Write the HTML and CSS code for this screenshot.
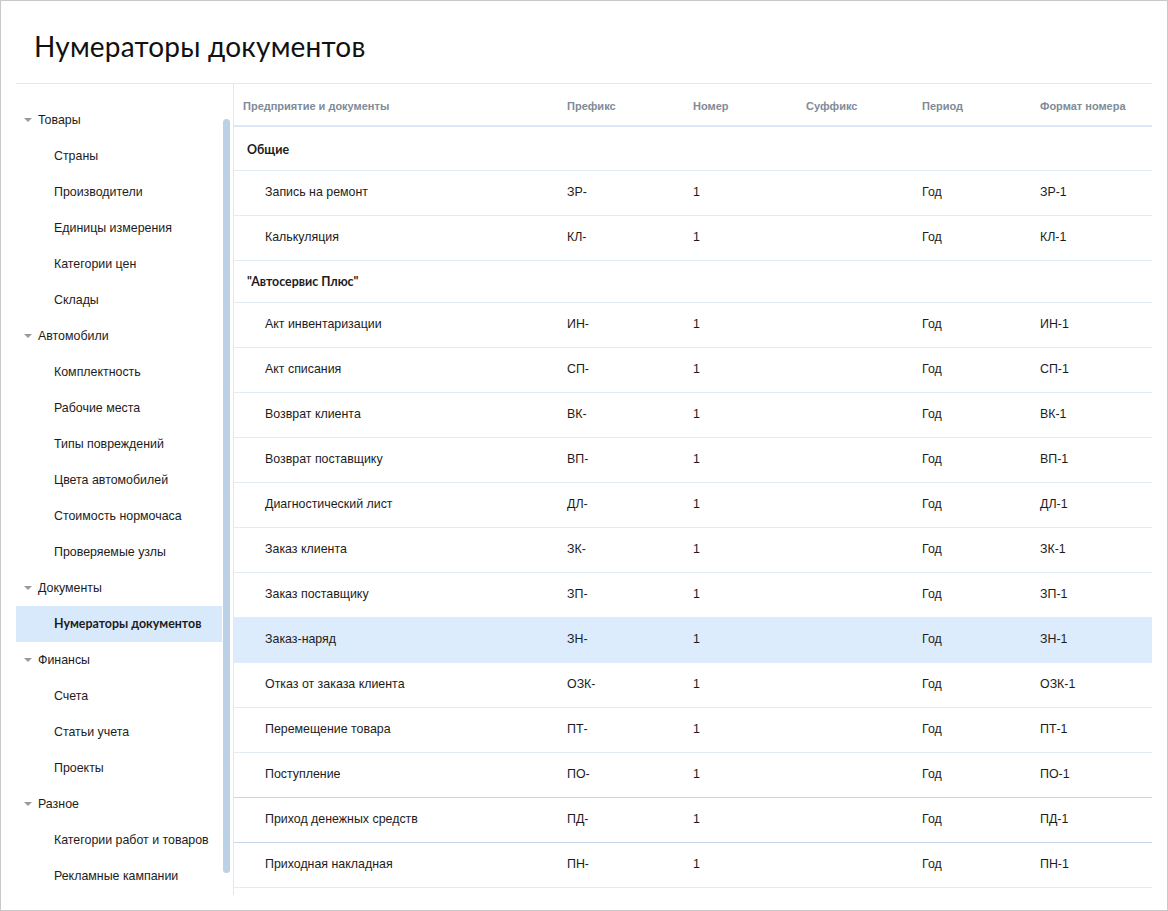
FILE: index.html
```html
<!DOCTYPE html>
<html lang="ru">
<head>
<meta charset="utf-8">
<title>Нумераторы документов</title>
<link rel="stylesheet" href="styles.css">
</head>
<body>
<div class="frame">
  <h1 class="title">Нумераторы документов</h1>
  <div class="main">
    <aside class="sidebar">
      <ul class="nav">
        <li class="nav-item parent"><span class="caret"></span>Товары</li>
        <li class="nav-item child">Страны</li>
        <li class="nav-item child">Производители</li>
        <li class="nav-item child">Единицы измерения</li>
        <li class="nav-item child">Категории цен</li>
        <li class="nav-item child">Склады</li>
        <li class="nav-item parent"><span class="caret"></span>Автомобили</li>
        <li class="nav-item child">Комплектность</li>
        <li class="nav-item child">Рабочие места</li>
        <li class="nav-item child">Типы повреждений</li>
        <li class="nav-item child">Цвета автомобилей</li>
        <li class="nav-item child">Стоимость нормочаса</li>
        <li class="nav-item child">Проверяемые узлы</li>
        <li class="nav-item parent"><span class="caret"></span>Документы</li>
        <li class="nav-item child active">Нумераторы документов</li>
        <li class="nav-item parent"><span class="caret"></span>Финансы</li>
        <li class="nav-item child">Счета</li>
        <li class="nav-item child">Статьи учета</li>
        <li class="nav-item child">Проекты</li>
        <li class="nav-item parent"><span class="caret"></span>Разное</li>
        <li class="nav-item child">Категории работ и товаров</li>
        <li class="nav-item child">Рекламные кампании</li>
      </ul>
      <div class="scroll-track"><div class="scroll-thumb"></div></div>
    </aside>
    <section class="grid">
      <div class="row head">
        <div class="c c1">Предприятие и документы</div>
        <div class="c c2">Префикс</div>
        <div class="c c3">Номер</div>
        <div class="c c4">Суффикс</div>
        <div class="c c5">Период</div>
        <div class="c c6">Формат номера</div>
      </div>
      <div class="row group"><div class="c">Общие</div></div>
      <div class="row item"><div class="c c1">Запись на ремонт</div><div class="c c2">ЗР-</div><div class="c c3">1</div><div class="c c4"></div><div class="c c5">Год</div><div class="c c6">ЗР-1</div></div>
      <div class="row item"><div class="c c1">Калькуляция</div><div class="c c2">КЛ-</div><div class="c c3">1</div><div class="c c4"></div><div class="c c5">Год</div><div class="c c6">КЛ-1</div></div>
      <div class="row group compact"><div class="c">"Автосервис Плюс"</div></div>
      <div class="row item"><div class="c c1">Акт инвентаризации</div><div class="c c2">ИН-</div><div class="c c3">1</div><div class="c c4"></div><div class="c c5">Год</div><div class="c c6">ИН-1</div></div>
      <div class="row item"><div class="c c1">Акт списания</div><div class="c c2">СП-</div><div class="c c3">1</div><div class="c c4"></div><div class="c c5">Год</div><div class="c c6">СП-1</div></div>
      <div class="row item"><div class="c c1">Возврат клиента</div><div class="c c2">ВК-</div><div class="c c3">1</div><div class="c c4"></div><div class="c c5">Год</div><div class="c c6">ВК-1</div></div>
      <div class="row item"><div class="c c1">Возврат поставщику</div><div class="c c2">ВП-</div><div class="c c3">1</div><div class="c c4"></div><div class="c c5">Год</div><div class="c c6">ВП-1</div></div>
      <div class="row item"><div class="c c1">Диагностический лист</div><div class="c c2">ДЛ-</div><div class="c c3">1</div><div class="c c4"></div><div class="c c5">Год</div><div class="c c6">ДЛ-1</div></div>
      <div class="row item"><div class="c c1">Заказ клиента</div><div class="c c2">ЗК-</div><div class="c c3">1</div><div class="c c4"></div><div class="c c5">Год</div><div class="c c6">ЗК-1</div></div>
      <div class="row item"><div class="c c1">Заказ поставщику</div><div class="c c2">ЗП-</div><div class="c c3">1</div><div class="c c4"></div><div class="c c5">Год</div><div class="c c6">ЗП-1</div></div>
      <div class="row item selected"><div class="c c1">Заказ-наряд</div><div class="c c2">ЗН-</div><div class="c c3">1</div><div class="c c4"></div><div class="c c5">Год</div><div class="c c6">ЗН-1</div></div>
      <div class="row item"><div class="c c1">Отказ от заказа клиента</div><div class="c c2">ОЗК-</div><div class="c c3">1</div><div class="c c4"></div><div class="c c5">Год</div><div class="c c6">ОЗК-1</div></div>
      <div class="row item"><div class="c c1">Перемещение товара</div><div class="c c2">ПТ-</div><div class="c c3">1</div><div class="c c4"></div><div class="c c5">Год</div><div class="c c6">ПТ-1</div></div>
      <div class="row item edge"><div class="c c1">Поступление</div><div class="c c2">ПО-</div><div class="c c3">1</div><div class="c c4"></div><div class="c c5">Год</div><div class="c c6">ПО-1</div></div>
      <div class="row item edge"><div class="c c1">Приход денежных средств</div><div class="c c2">ПД-</div><div class="c c3">1</div><div class="c c4"></div><div class="c c5">Год</div><div class="c c6">ПД-1</div></div>
      <div class="row item"><div class="c c1">Приходная накладная</div><div class="c c2">ПН-</div><div class="c c3">1</div><div class="c c4"></div><div class="c c5">Год</div><div class="c c6">ПН-1</div></div>
    </section>
  </div>
</div>
</body>
</html>
```

FILE: styles.css
```css
* { box-sizing: border-box; }
html, body { margin: 0; padding: 0; background: #fff; }
body {
  font-family: "Liberation Sans", Arial, sans-serif;
  color: #1c1c1c;
  font-size: 12.4px;
}
.frame {
  width: 1168px;
  height: 911px;
  border: 1px solid #c8c8c8;
  padding: 0 15px;
  overflow: hidden;
}
.title {
  margin: 0;
  height: 83px;
  padding: 28px 0 0 18px;
  font-family: Lato, "Noto Sans", sans-serif;
  font-weight: 400;
  font-size: 28px;
  letter-spacing: 0.2px;
  line-height: 34px;
  color: #111;
  border-bottom: 1px solid #dce8f3;
}
.main {
  display: flex;
  height: 811px;
}
.sidebar {
  width: 217px;
  flex: none;
  display: flex;
  overflow: hidden;
}
.nav {
  list-style: none;
  margin: 0;
  padding: 18px 0 0;
  width: 206px;
  flex: none;
  height: 811px;
  overflow: hidden;
}
.nav-item {
  height: 36px;
  line-height: 36px;
  white-space: nowrap;
  font-size: 12.4px;
  color: #1c1c1c;
}
.parent {
  padding-left: 8px;
  display: flex;
  align-items: center;
}
.caret {
  width: 0;
  height: 0;
  border-left: 4px solid transparent;
  border-right: 4px solid transparent;
  border-top: 4px solid #9a9a9a;
  margin-right: 6px;
}
.child { padding-left: 38px; }
.active {
  background: #d8e9fb;
  font-family: Lato, "Liberation Sans", sans-serif;
  font-weight: 700;
}
.scroll-track {
  width: 11px;
  flex: none;
  padding: 35px 0 0 1px;
}
.scroll-thumb {
  width: 7px;
  height: 754px;
  border-radius: 4px;
  background: #bcd1e5;
}
.grid {
  flex: 1;
  border-left: 1px solid #dce8f3;
  height: 811px;
  overflow: hidden;
}
.row {
  display: flex;
  align-items: center;
  border-bottom: 1px solid #e2ecf6;
}
.c { padding-left: 9px; white-space: nowrap; }
.c1 { width: 324px; }
.c2 { width: 126px; }
.c3 { width: 113px; }
.c4 { width: 116px; }
.c5 { width: 118px; }
.c6 { width: 121px; }
.head {
  height: 43px;
  border-bottom: 2px solid #dbe8f5;
  font-size: 11px;
  font-weight: 700;
  color: #808b97;
  padding-top: 2px;
}
.group {
  height: 44px;
  font-family: Lato, "Liberation Sans", sans-serif;
  font-weight: 700;
  padding-left: 4px;
  padding-top: 2px;
}
.group.compact { height: 42px; padding-top: 0; }
.item { height: 45px; padding-bottom: 2px; }
.item .c1 { padding-left: 31px; }
.selected { background: #dcecfc; }
.edge { border-bottom-color: #c6d7e8; }
```
